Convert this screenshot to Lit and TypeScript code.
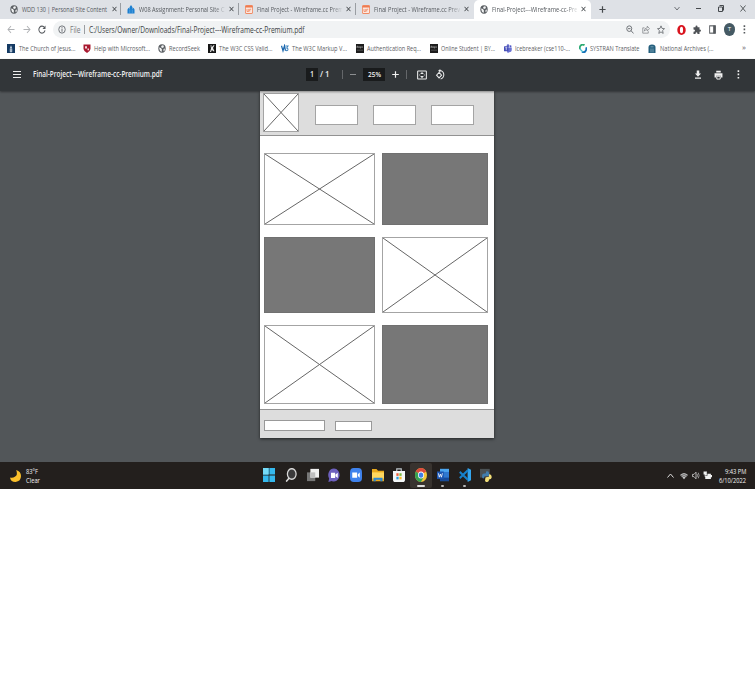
import { LitElement, html, svg, css, TemplateResult } from "lit";
import { customElement, property } from "lit/decorators.js";

/* Single line of text squeezed to a given width. */
const fit = (text: string, width: number, size = 7.7, weight = 400) => html`
  <svg class="fit" width=${width} height="12" viewBox="0 0 ${width} 12" overflow="visible">
    <text x="0" y="9" font-size=${size} font-weight=${weight} fill="currentColor"
      textLength=${width} lengthAdjust="spacingAndGlyphs">${text}</text>
  </svg>`;

const icon = (w: number, h: number, box: string, body: TemplateResult | unknown) =>
  html`<svg width=${w} height=${h} viewBox=${box} preserveAspectRatio="none" fill="none">${body}</svg>`;

const art: Record<string, unknown> = {
  globe: svg`<circle cx="8" cy="8" r="7.4" fill="#5b5f63"/><path d="M2 6l4 1 2 3-1 4-3-2zM8 2l4 1-1 3-3 1-2-2zM11 9l3-1-1 4-2 1z" fill="#f3f4f5"/>`,
  temple: svg`<path d="M1 15V8l2-3 2 2V4l3-4 3 4v3l2-2 2 3v7z" fill="#1b7fd0"/><path d="M5.500 8v7M10.500 8v7" stroke="#7fbbe8"/>`,
  wire: svg`<rect x=".8" y="1" width="14.400" height="14" rx="2" fill="#fde9e1" stroke="#f08a63" stroke-width="1.800"/><path d="M1 3h14" stroke="#ee7b50" stroke-width="3"/><path d="M4 7v4.500h3.500V7M9.500 11.500V7.500h3" stroke="#f08a63" stroke-width="1.600"/>`,
  church: svg`<rect width="16" height="16" fill="#143a63"/><path d="M8 3v11M6 6h4M6.500 8v6h3V8" stroke="#d5e2ef" stroke-width="1.500"/>`,
  shield: svg`<path d="M1 1h14v8q-1 5-7 7Q2 14 1 9z" fill="#a8182f"/><path d="M4 4h4v4H4zM9 8h3v3H9z" fill="#f4d9dd"/>`,
  bw: svg`<rect width="16" height="16" fill="#161616"/><path d="M5 2h2v4l4-4h2l-3 5 3 6h-3L8 10l-2 4H4l2-6z" fill="#eee"/>`,
  w3: svg`<path d="M1 3l3 9 3-9 2 9" stroke="#1a66ad" stroke-width="2.400"/><path d="M9 3.500h5L11.500 7Q15 8 13.500 11q-2 2-4 0" stroke="#3e83bd" stroke-width="2"/>`,
  byui: svg`<rect width="16" height="16" fill="#1d1d1d"/><path d="M2 7V4h2v3M6 4v3M8 4v3h2V4M12.500 4v3" stroke="#aaa" stroke-width="1.200"/><path d="M2 11h12" stroke="#777"/>`,
  teams: svg`<circle cx="8" cy="3" r="2.600" fill="#6269c6"/><circle cx="13" cy="4" r="2" fill="#5059c9"/><path d="M5 6h10.500v5q-1 4-4 3-2 2-5 1z" fill="#6a72d2"/><rect y="4" width="9" height="9" rx="1" fill="#454eb8"/><path d="M2.500 6.500h4M4.500 6.500V11" stroke="#fff" stroke-width="1.200"/>`,
  systran: svg`<path d="M11 2A6 6 0 0 0 2 9" stroke="#2daa72" stroke-width="3.500"/><path d="M6 14A6 6 0 0 0 14 6" stroke="#1772b8" stroke-width="3.500"/><path d="M2 8q2 4 6 6" stroke="#44bfd0" stroke-width="2.500"/>`,
  arch: svg`<path d="M1 16V6Q1 1 8 1t7 5v10z" fill="#245f7d"/><path d="M6 15V8M10 8v7M5 5h6" stroke="#a9c6d3" stroke-width="1.200"/>`,
  info: svg`<circle cx="8" cy="8" r="6.500" stroke="#5f6368" stroke-width="1.600"/><path d="M8 7v5M8 4v2" stroke="#5f6368" stroke-width="1.700"/>`,
  back: svg`<path d="M15 8H2M8 2L2 8l6 6" stroke="#b0b2b5" stroke-width="1.800"/>`,
  fwd: svg`<path d="M1 8h13M8 2l6 6-6 6" stroke="#b0b2b5" stroke-width="1.800"/>`,
  reload: svg`<path d="M13 4.500A6.200 6.200 0 1 0 14 9.500" stroke="#55595d" stroke-width="2"/><path d="M15 1v6H9z" fill="#55595d"/>`,
  mag: svg`<circle cx="6.500" cy="6.500" r="5" stroke="#63676b" stroke-width="1.700"/><path d="M10 10l5 5M4 6.500h5" stroke="#63676b" stroke-width="1.700"/>`,
  share: svg`<path d="M5 5H1.500v9.500h11V11M4.500 11q0-6 6-6V2l4.500 4.500-4.500 4V8q-4 0-6 3z" stroke="#777b7f" stroke-width="1.300"/>`,
  star: svg`<path d="M8 1.500l2 4.600 5 .4-3.800 3.300L12.400 15 8 12.200 3.600 15l1.200-5.200L1 6.500l5-.4z" stroke="#5f6368" stroke-width="1.500"/>`,
  opera: svg`<ellipse cx="8" cy="8" rx="7.500" ry="8" fill="#d9141e"/><ellipse cx="8" cy="8" rx="2.800" ry="5.200" fill="#fff"/>`,
  puzzle: svg`<path d="M1 4h4V3q0-2 2-2t2 2v1h4v4q3 0 3 2t-3 2v4H9q0-3-2-3t-2 3H1v-4q3 0 3-2T1 8z" fill="#4f5357"/>`,
  side: svg`<rect x="1.500" y="1.500" width="13" height="13" stroke="#55595d" stroke-width="2"/><path d="M9.500 1H15v14H9.500z" fill="#55595d"/>`,
  fitpage: svg`<rect x="1" y="1.500" width="14" height="13" rx="1" stroke="#e8e9ea" stroke-width="1.700"/><path d="M8 3l3 3.500H5zM8 13l3-3.500H5z" fill="#e8e9ea"/><path d="M3.500 8h1.500M11 8h1.500" stroke="#e8e9ea" stroke-width="1.400"/>`,
  rotate: svg`<path d="M6.500 5l4 4-4 4-4-4z" stroke="#e8e9ea" stroke-width="1.600"/><path d="M7 2.500A6 6 0 1 1 9 14.500" stroke="#e8e9ea" stroke-width="1.700"/><path d="M8.500 0v5L5 2.500z" fill="#e8e9ea"/>`,
  download: svg`<path d="M5.500 1h5v5H14L8 12 2 6h3.500zM2 13.500h12v2H2z" fill="#f1f1f1"/>`,
  print: svg`<path d="M4 1h8v3H4zM1 5h14v7h-3V9H4v3H1z" fill="#f1f1f1"/><path d="M5 10h6v4.500H5z" stroke="#f1f1f1" stroke-width="1.600"/>`,
  windows: svg`<path d="M0 0h7.500v7.500H0zM8.500 0H16v7.500H8.500zM0 8.500h7.500V16H0zM8.500 8.500H16V16H8.500z" fill="#35b9ee"/><path d="M0 0h7.500v7.500H0z" fill="#74daf8"/>`,
  search: svg`<ellipse cx="9" cy="6.800" rx="5.800" ry="6" fill="#3b3a3b" stroke="#d9d9d9" stroke-width="1.700"/><path d="M5.500 11.500L1.500 15.500" stroke="#d9d9d9" stroke-width="2"/>`,
  tasks: svg`<path d="M0 5h11v10H0z" fill="#777"/><path d="M4.500 1H16v10H4.500z" fill="#f0f0f0"/><path d="M4.500 5H11v6H4.500z" fill="#bebebe"/>`,
  chat: svg`<path d="M8 .5a7.500 7.500 0 1 1-3 14.400L.5 16l1-4A7.500 7.500 0 0 1 8 .5z" fill="#6d60bd"/><path d="M4 5.500h5.500v6H4zM10 7.500l3-2v6l-3-2z" fill="#fff"/>`,
  zoom: svg`<rect width="16" height="16" rx="5" fill="#3f82ed"/><path d="M3 5h6.500v6H3zM10.500 7L13 5v6l-2.500-2z" fill="#fff"/>`,
  folder: svg`<path d="M0 1h6l2 2h8v12H0z" fill="#e9a91d"/><path d="M0 5h16v7H0z" fill="#ffd75e"/><path d="M2 15v-4h12v4h-3v-1.500H5V15z" fill="#2d87d0"/>`,
  store: svg`<path d="M5 4V1h6v3" stroke="#bfc7cd" stroke-width="1.500"/><path d="M0 3.500h16V13q0 3-3 3H3q-3 0-3-3z" fill="#f3f6f7"/><path d="M4.500 6h3v3h-3z" fill="#ef5b35"/><path d="M8.500 6h3v3h-3z" fill="#7bb83c"/><path d="M4.500 10h3v3h-3z" fill="#2aa0df"/><path d="M8.500 10h3v3h-3z" fill="#f8b929"/>`,
  chrome: svg`<circle cx="8" cy="8" r="8" fill="#f5c83a"/><path d="M8 8L1.100 4A8 8 0 0 1 14.900 4z" fill="#dd4a3e"/><path d="M8 8L1.100 4A8 8 0 0 0 8 16l3-5z" fill="#35a252"/><circle cx="8" cy="8" r="4" fill="#fff"/><circle cx="8" cy="8" r="3" fill="#4080e8"/>`,
  word: svg`<path d="M4 1h12v14H4z" fill="#2f78cf"/><path d="M4 1h12v3.500H4z" fill="#4ca5ee"/><path d="M4 11h12v4H4z" fill="#174a98"/><path d="M0 4h9v8.500H0z" fill="#1b55b0"/><path d="M1.800 6l1.300 4.500 1.400-3.500 1.400 3.500L7.200 6" stroke="#fff" stroke-width="1"/>`,
  code: svg`<path d="M11.500 0L16 2v12l-4.500 2z" fill="#34a5ee"/><path d="M12 2.500L1 11.500M12 13.500L1 4.500" stroke="#1681cc" stroke-width="2.600"/>`,
  python: svg`<path d="M0 1h13v10H0z" fill="#4b5154"/><path d="M8 4q4-1 4 2v3H7q-2 0-2 3-3 0-2-4 0-2 5-2z" fill="#417dad"/><path d="M12 7q4 0 3.500 4-.5 2-3.500 2 0 3-4 3-2-1-1-4 0-2 5-2z" fill="#f3df78"/>`,
  moon: svg`<path d="M9 0q3 7-2 9-3 2-7 1 1 6 8 6 8-1 8-8 0-6-7-8z" fill="#fbc02b"/>`,
  wifi: svg`<path d="M0 6q8-8 16 0l-8 9z" fill="#6f6e6e"/><path d="M1 6q7-6 14 0M3.500 9q4.500-4 9 0" stroke="#d0d0d0" stroke-width="1.500"/><path d="M6 11q2-2 4 0l-2 3z" fill="#eee"/>`,
  sound: svg`<path d="M1 6h3l4-4v12l-4-4H1z" stroke="#d8d8d8" stroke-width="1.400"/><path d="M10 5q2 3 0 6M12.500 3q3.500 5 0 10" stroke="#bbb" stroke-width="1.400"/>`,
  battery: svg`<path d="M4 5h10v9H4zM14 7h2v4h-2zM1 1h6v5H5v4H3V6H1z" fill="#f0f0f0"/><path d="M7.500 2v6H4" stroke="#333"/>`,
};

const ic = (name: string, w = 8, h = w) => icon(w, h, "0 0 16 16", art[name]);
const close = () => icon(5, 6, "0 0 5 6", svg`<path d="M.5 .8l4 4.400M4.500 .8l-4 4.400" stroke="#42464a"/>`);
const dots = (color: string) => icon(3, 9, "0 0 3 9",
  svg`<path d="M.6 .3h1.600v1.700H.6zM.6 3.600h1.600v1.700H.6zM.6 6.900h1.600v1.700H.6z" fill=${color}/>`);

@customElement("wire-image")
class WireImage extends LitElement {
  static styles = css`
    :host { display: block; box-sizing: border-box; border: 1px solid #a4a4a4; background: #fff; }
    svg { display: block; width: 100%; height: 100%; }
  `;
  render() {
    return html`<svg viewBox="0 0 100 100" preserveAspectRatio="none">
      <path d="M0 0L100 100M100 0L0 100" stroke="#666" stroke-width="1" vector-effect="non-scaling-stroke"/>
    </svg>`;
  }
}

@customElement("browser-tab")
class BrowserTab extends LitElement {
  @property() label = "";
  @property() glyph = "globe";
  @property({ type: Number }) span = 88;
  @property({ type: Boolean, reflect: true }) active = false;
  @property({ type: Boolean, reflect: true }) faded = false;
  @property({ type: Boolean, reflect: true }) divided = false;
  static styles = css`
    :host { display: flex; box-sizing: border-box; width: 117.400px; height: 19px; align-items: center; padding: 0 0 1px 6px; color: #55595e; position: relative; }
    :host([active]) { background: #fff; border-radius: 5px 5px 0 0; }
    svg { display: block; flex: none; }
    .label { width: 85.500px; margin: 0 4px 0 4px; }
    :host([faded]) .label { -webkit-mask-image: linear-gradient(90deg, #000 87%, transparent 102%); mask-image: linear-gradient(90deg, #000 87%, transparent 102%); }
    :host([divided])::after { content: ""; position: absolute; right: 0; top: 3px; width: 1px; height: 12px; background: #999da2; }
    text { font-family: "Open Sans", "Noto Sans", sans-serif; font-variant-ligatures: none; }
  `;
  render() {
    return html`${ic(this.glyph, 8, 9)}<div class="label">${fit(this.label, this.span)}</div>${close()}`;
  }
}

const tabs = [
  { label: "WDD 130 | Personal Site Content", glyph: "globe", span: 85, divided: true },
  { label: "W08 Assignment: Personal Site C", glyph: "temple", span: 85.5, faded: true, divided: true },
  { label: "Final Project - Wireframe.cc Prem", glyph: "wire", span: 86.5, faded: true, divided: true },
  { label: "Final Project - Wireframe.cc Prev", glyph: "wire", span: 86, faded: true },
  { label: "Final-Project---Wireframe-cc-Pre", glyph: "globe", span: 85.5, faded: true, active: true },
];

const bookmarks: [string, string, number, number][] = [
  ["church", "The Church of Jesus...", 56.5, 75.5],
  ["shield", "Help with Microsoft...", 56, 75],
  ["globe", "RecordSeek", 31, 50],
  ["bw", "The W3C CSS Valid...", 53.5, 73],
  ["w3", "The W3C Markup V...", 55, 75],
  ["byui", "Authentication Req...", 54, 74],
  ["byui", "Online Student | BY...", 54, 74],
  ["teams", "Icebreaker (cse110-...", 55, 75],
  ["systran", "SYSTRAN Translate", 49.5, 69.5],
  ["arch", "National Archives (...", 53.5, 90],
];

const apps = ["windows", "search", "tasks", "chat", "zoom", "folder", "store", "chrome", "word", "code", "python"];

@customElement("app-root")
class AppRoot extends LitElement {
  static styles = css`
    :host { display: block; width: 755px; height: 686px; background: #fff; overflow: hidden; font-family: "Open Sans", "Noto Sans", sans-serif; font-variant-ligatures: none; }
    * { box-sizing: border-box; }
    svg { display: block; flex: none; }
    .row { display: flex; align-items: center; }

    .strip { height: 19px; background: #dee1e6; padding-left: 4px; }
    .plus { margin-left: 8px; }
    .controls { display: flex; align-items: center; gap: 16.500px; margin-left: auto; padding: 0 9px 2px 0; }

    .address { height: 21px; padding: 0 9px 0 7px; color: #3b3f43; }
    .nav { display: flex; gap: 7.500px; width: 46px; }
    .pill { display: flex; align-items: center; width: 617px; height: 17px; border-radius: 9px; background: #f1f3f4; padding: 0 5px; }
    .file { margin-left: 4px; color: #75797d; }
    .bar { width: 1px; height: 9px; background: #9b9ea1; margin: 0 4px 0 3px; }
    .marks { display: flex; gap: 7.500px; margin-left: auto; }
    .tools { display: flex; align-items: center; flex: 1; justify-content: space-between; padding-left: 6.500px; }
    .avatar { width: 11.500px; height: 13px; border-radius: 50%; background: #455a64; color: #fff; font-size: 6px; line-height: 13px; text-align: center; }

    .bookmarks { height: 19px; padding: 0 9px 3px 7px; color: #5c6064; }
    .mark { display: flex; align-items: center; gap: 3.500px; }
    .more { font-size: 8px; margin: -3px 0 0 auto; line-height: 11px; }

    .pdfbar { height: 32px; background: #323639; color: #f1f1f1; padding: 0 15px 1px 13px; box-shadow: 0 1px 2px rgba(0, 0, 0, .4); position: relative; }
    .title { margin-left: 12px; width: 272.500px; }
    .pdfbar .fit { margin-top: -1px; }
    .field { display: flex; align-items: center; justify-content: center; height: 13px; background: #191b1c; }
    .f1 { width: 12px; }
    .f2 { width: 22px; margin: 0 7px 0 7px; }
    .of { margin: 0 12px 0 2.500px; }
    .sep { width: 1px; height: 9px; background: #64676a; }
    .after { margin: 0 9.500px 0 7px; }
    .turn { margin-left: 8px; }
    .actions { display: flex; align-items: center; gap: 12px; margin-left: auto; }
    .actions svg:last-child { margin-left: 2px; }

    .viewer { height: 371px; background: #525659; padding-left: 260px; }
    .viewer, .page { display: flow-root; }
    .page { width: 234.400px; height: 347px; background: #fff; box-shadow: 0 1px 3px rgba(0, 0, 0, .6); }
    .head { display: flex; height: 45px; padding: 2px 0 0 2.500px; background: #ddd; border-bottom: 1px solid #929292; }
    .logo { width: 36px; height: 39px; margin-right: 16px; }
    .button { width: 43px; height: 20px; margin: 12px 15px 0 0; background: #fff; border: 1px solid #a4a4a4; }
    .grid { display: grid; grid-template-columns: 111px 106px; grid-template-rows: 72px 76px 79px; column-gap: 7px; row-gap: 12px; height: 273px; padding: 17px 0 0 4px; }
    .block { background: #777; border: 1px solid #707070; }
    .foot { display: flex; align-items: center; gap: 9.500px; height: 29px; padding: 3px 0 0 4px; background: #ddd; border-top: 1px solid #929292; }
    .foot1 { width: 61.400px; height: 11px; background: #fff; border: 1px solid #999; }
    .foot2 { width: 37.500px; height: 10px; background: #fff; border: 1px solid #999; }

    .taskbar { height: 27px; background: #231f1d; color: #f1f1f1; padding: 0 9px 0 10px; }
    .weather { display: flex; align-items: center; gap: 4.500px; width: 248.500px; }
    .stack { display: flex; flex-direction: column; margin-top: -4px; }
    .stack svg, .clock svg { margin-bottom: -3px; }
    .apps { display: flex; }
    .app { display: flex; flex-direction: column; align-items: center; width: 21.700px; height: 25px; padding-top: 5px; }
    .app.on { background: #38332f; border-radius: 2px; }
    .dash { width: 3px; height: 1.500px; margin-top: 3px; background: #b9b9b9; border-radius: 1px; }
    .on .dash { width: 8px; background: #ddd; }
    .tray { display: flex; align-items: center; gap: 3.500px; margin-left: auto; }
    .tray > svg:first-child { margin-right: 3px; }
    .clock { display: flex; flex-direction: column; align-items: flex-end; margin: -4px 0 0 3.500px; }
  `;

  render() {
    return html`
      <div class="row strip">
        ${tabs.map(t => html`<browser-tab .label=${t.label} .glyph=${t.glyph} .span=${t.span}
          ?active=${!!t.active} ?faded=${!!t.faded} ?divided=${!!t.divided}></browser-tab>`)}
        <svg class="plus" width="7" height="7" viewBox="0 0 7 7"><path d="M3.500 .2v6.600M.4 3.500h6.200" stroke="#45494d" stroke-width="1.200"/></svg>
        <div class="controls">
          ${icon(6, 7, "0 0 6 7", svg`<path d="M.5 2L3 5l2.500-3" stroke="#63676b" stroke-width=".9"/>`)}
          ${icon(5, 7, "0 0 5 7", svg`<path d="M0 3.500h5" stroke="#45494d"/>`)}
          ${icon(6, 7, "0 0 6 7", svg`<path d="M.5 2h4v4.500h-4zM1.500 .5h4v5" stroke="#45494d"/>`)}
          ${icon(6, 7, "0 0 6 7", svg`<path d="M.5 .5l5 6M5.500 .5l-5 6" stroke="#45494d" stroke-width=".9"/>`)}
        </div>
      </div>

      <div class="row address">
        <div class="nav">${ic("back", 8, 9)}${ic("fwd", 8, 9)}${ic("reload", 8, 9)}</div>
        <div class="pill">
          ${ic("info", 8, 9)}
          <div class="file">${fit("File", 10.5, 8.7)}</div>
          <div class="bar"></div>
          ${fit("C:/Users/Owner/Downloads/Final-Project---Wireframe-cc-Premium.pdf", 215.5, 8.8)}
          <div class="marks">${ic("mag", 8, 9)}${ic("share", 8, 9)}${ic("star", 8, 9)}</div>
        </div>
        <div class="tools">
          ${ic("opera", 9, 10)}${ic("puzzle", 8, 9)}${ic("side", 7, 9)}
          <div class="avatar">T</div>${dots("#55595d")}
        </div>
      </div>

      <div class="row bookmarks">
        ${bookmarks.map(([g, label, w, pitch]) => html`
          <div class="mark" style="width:${pitch}px">${ic(g, 8, 9)}${fit(label, w, 7.6)}</div>`)}
        <div class="more">»</div>
      </div>

      <div class="row pdfbar">
        ${icon(8, 9, "0 0 8 9", svg`<path d="M0 1.500h8M0 4.500h8M0 7.500h8" stroke="#ececec" stroke-width="1.200"/>`)}
        <div class="title">${fit("Final-Project---Wireframe-cc-Premium.pdf", 129, 8.2, 600)}</div>
        <div class="field f1">${fit("1", 4, 8, 600)}</div>
        <div class="of">${fit("/  1", 9.5, 8, 600)}</div>
        <div class="sep"></div>
        <svg width="7.500" height="1"></svg>
        ${icon(6, 7, "0 0 6 7", svg`<path d="M0 3.500h6" stroke="#8c8f91"/>`)}
        <div class="field f2">${fit("25%", 13, 7.8, 600)}</div>
        ${icon(7, 7, "0 0 7 7", svg`<path d="M3.500 .2v6.600M.2 3.500h6.600" stroke="#f1f1f1" stroke-width="1.200"/>`)}
        <div class="sep after"></div>
        ${ic("fitpage", 10, 10)}
        <div class="turn">${ic("rotate", 10, 11)}</div>
        <div class="actions">${ic("download", 8, 9)}${ic("print", 9, 10)}${dots("#f1f1f1")}</div>
      </div>

      <div class="viewer">
        <div class="page">
          <div class="head">
            <wire-image class="logo"></wire-image>
            <div class="button"></div><div class="button"></div><div class="button"></div>
          </div>
          <div class="grid">
            <wire-image></wire-image><div class="block"></div>
            <div class="block"></div><wire-image></wire-image>
            <wire-image></wire-image><div class="block"></div>
          </div>
          <div class="foot"><div class="foot1"></div><div class="foot2"></div></div>
        </div>
      </div>

      <div class="row taskbar">
        <div class="weather">
          ${ic("moon", 11, 12)}
          <div class="stack">${fit("83°F", 12, 7.4)}${fit("Clear", 14, 7.4)}</div>
        </div>
        <div class="apps">
          ${apps.map(a => html`<div class="app ${a === "chrome" ? "on" : ""}">
            ${ic(a, 12, 14)}
            ${["chrome", "word", "code"].includes(a) ? html`<div class="dash"></div>` : ""}
          </div>`)}
        </div>
        <div class="tray">
          ${icon(7, 6, "0 0 7 6", svg`<path d="M.5 4.500l3-3.500 3 3.500" stroke="#ddd"/>`)}
          ${ic("wifi", 8, 8)}${ic("sound", 8, 9)}${ic("battery", 9, 9)}
          <div class="clock">${fit("9:43 PM", 21.5, 7.4)}${fit("6/10/2022", 27, 7.4)}</div>
        </div>
      </div>
    `;
  }
}
